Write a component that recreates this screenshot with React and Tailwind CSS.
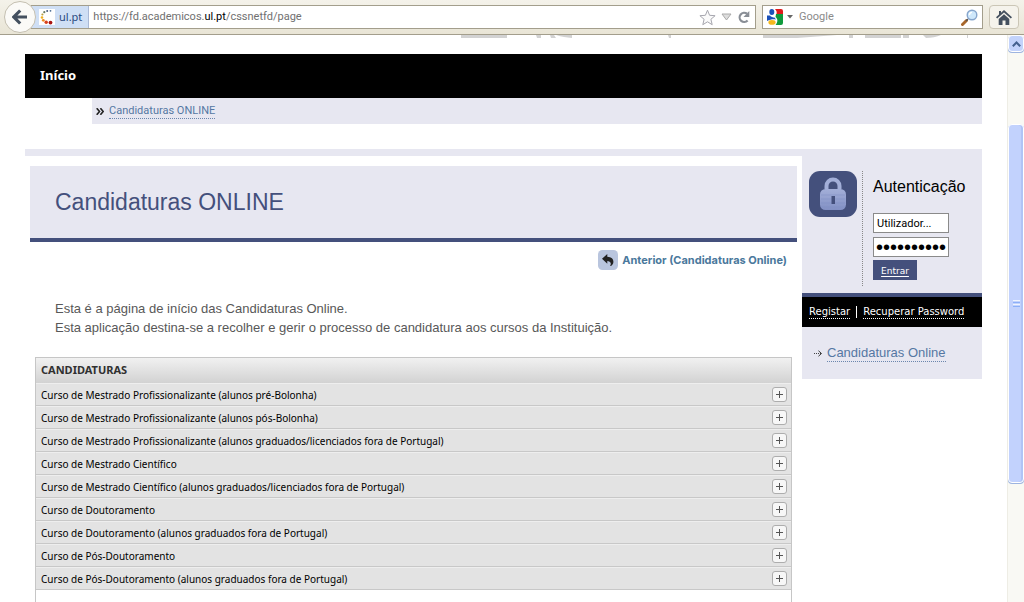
import React from "react";

const courses = [
  "Curso de Mestrado Profissionalizante (alunos pré-Bolonha)",
  "Curso de Mestrado Profissionalizante (alunos pós-Bolonha)",
  "Curso de Mestrado Profissionalizante (alunos graduados/licenciados fora de Portugal)",
  "Curso de Mestrado Científico",
  "Curso de Mestrado Científico (alunos graduados/licenciados fora de Portugal)",
  "Curso de Doutoramento",
  "Curso de Doutoramento (alunos graduados fora de Portugal)",
  "Curso de Pós-Doutoramento",
  "Curso de Pós-Doutoramento (alunos graduados fora de Portugal)",
];

function SiteIcon() {
  return (
    <svg width="16" height="16" viewBox="0 0 16 16" aria-hidden="true">
      <rect width="16" height="16" fill="#fff" />
      <circle cx="11.5" cy="1.8" r="0.9" fill="#4a6a90" />
      <circle cx="8.2" cy="1.900" r="1" fill="#4a5a80" />
      <circle cx="5.300" cy="3.200" r="1.1" fill="#6a7a60" />
      <circle cx="3.400" cy="5.500" r="1.100" fill="#b9a040" />
      <circle cx="3" cy="8.500" r="1.3" fill="#f0b020" />
      <circle cx="4.300" cy="11.300" r="1.400" fill="#ee8a20" />
      <circle cx="7.200" cy="13.200" r="1.700" fill="#d8401c" />
      <circle cx="11.5" cy="13.600" r="1.900" fill="#a81414" />
    </svg>
  );
}

function GoogleIcon() {
  return (
    <svg width="16" height="16" viewBox="0 0 16 16" aria-hidden="true">
      <rect width="16" height="16" fill="#fff" />
      <path d="M8 0h6a2 2 0 0 1 2 2v3H9.5C10 3 9.500 1.500 8 0z" fill="#e01b1b" />
      <path d="M9 5h7v9a2 2 0 0 1-2 2H8.500C11 13 11 10 8.500 8z" fill="#0f9a3c" />
      <path d="M0 6.500h3C4 8 6 8.500 7.500 8.500L9 10.500C6 10 3 10.500 0 12z" fill="#1a50b8" />
      <ellipse cx="4.800" cy="3" rx="2.500" ry="3" fill="#1a50b8" />
      <ellipse cx="5" cy="13.400" rx="3.600" ry="2.400" fill="#f5b81c" />
    </svg>
  );
}

function Toolbar() {
  return (
    <header className="flex h-[35px] shrink-0 items-center border-b border-[#a39e8c] bg-linear-to-b from-[#f4f2ea] to-[#e9e5d6] pr-[5px] font-['Noto_Sans',sans-serif] text-[11px]">
      <button aria-label="Voltar" className="z-10 -mr-[5px] ml-1 flex size-8 shrink-0 items-center justify-center rounded-full border border-[#c4bfb0] bg-[#fbfaf7]">
        <svg width="16" height="16" viewBox="0 0 16 16" aria-hidden="true">
          <path d="M8.200 1.500 1.800 8l6.400 6.500M2.500 8H15" fill="none" stroke="#44505f" strokeWidth="3.200" />
        </svg>
      </button>
      <div className="flex h-6 min-w-0 flex-1 items-center border border-l-0 border-[#a39e8c] bg-white pr-1">
        <div className="flex h-full items-center gap-1 border-r border-[#aab9d6] bg-[#cfdff5] pr-[6px] pl-2 text-[#2a4a80]">
          <SiteIcon />
          <span>ul.pt</span>
        </div>
        <p className="flex-1 truncate pl-1 font-['Roboto',sans-serif] text-[#707070]">
          https://fd.academicos.<span className="text-black">ul.pt</span>/cssnetfd/page
        </p>
        <div className="flex items-center gap-[5px]">
          <button aria-label="Marcar esta página">
            <svg width="17" height="17" viewBox="0 0 17 17" aria-hidden="true">
              <path d="m8.500 1.200 2.100 5.100 5.500.4-4.200 3.600 1.300 5.400-4.700-2.900-4.700 2.900 1.300-5.400L.9 6.700l5.500-.4z" fill="#fafafa" stroke="#a6a6ae" />
            </svg>
          </button>
          <button aria-label="Mostrar histórico">
            <svg width="11" height="8" viewBox="0 0 11 8" aria-hidden="true">
              <path d="M1 1h9L5.500 7z" fill="#ddd" stroke="#aaa" />
            </svg>
          </button>
          <button aria-label="Recarregar">
            <svg width="14" height="14" viewBox="0 0 14 14" aria-hidden="true">
              <path d="M10.600 10.500A4.600 4.600 0 1 1 10 3.700" fill="none" stroke="#898e96" strokeWidth="2.200" />
              <path d="M12.300 1v6H6.500z" fill="#898e96" />
            </svg>
          </button>
        </div>
      </div>
      <div className="ml-[6px] flex h-6 w-[221px] shrink-0 items-center border border-[#a39e8c] bg-white px-1">
        <GoogleIcon />
        <svg className="ml-1" width="6" height="4" viewBox="0 0 6 4" aria-hidden="true">
          <path d="M0 0h6L3 3.500z" fill="#666" />
        </svg>
        <input aria-label="Pesquisar" placeholder="Google" className="min-w-0 flex-1 bg-transparent pl-[6px] font-['Roboto',sans-serif] outline-none placeholder:text-[#8a8a8a]" />
        <button aria-label="Procurar">
          <svg width="17" height="17" viewBox="0 0 17 17" aria-hidden="true">
            <path d="m1.500 15.500 4-4" stroke="#a8672c" strokeWidth="3" strokeLinecap="round" />
            <path d="m5 12 2-2" stroke="#555" strokeWidth="1.500" />
            <circle cx="11" cy="6" r="4.800" fill="#cfe8fb" stroke="#86a5cc" strokeWidth="1.400" />
            <path d="M8.500 6A2.600 2.600 0 0 1 11 3.400" fill="none" stroke="#fff" strokeWidth="1.300" />
          </svg>
        </button>
      </div>
      <button aria-label="Página inicial" className="ml-[6px] flex h-6 w-[30px] shrink-0 items-center justify-center rounded-sm border border-[#cbc6b6] bg-[#f5f3ec]">
        <svg width="16" height="15" viewBox="0 0 16 15" aria-hidden="true">
          <path d="M8 0l8 7.300-1.200 1.300L8 2.500 1.200 8.600 0 7.300 3 4.500V1h2v1.700z" fill="#44505f" />
          <path d="M8 4.200 13.300 9v6H9.500v-4.500h-3V15H2.700V9z" fill="#44505f" />
        </svg>
      </button>
    </header>
  );
}

function ScrollBar() {
  return (
    <div className="flex w-[17px] shrink-0 flex-col border-l border-[#eeede5] bg-[#f9f9f4]" aria-hidden="true">
      <div className="flex h-[17px] items-center justify-center rounded-sm border border-white bg-[#c3d3fb] shadow-[0_1px_0_#9db4e0]">
        <svg width="9" height="6" viewBox="0 0 9 6">
          <path d="m.8 5.200 3.700-3.700 3.700 3.700" fill="none" stroke="#44618f" strokeWidth="2" />
        </svg>
      </div>
      <div className="grow-[73]" />
      <div className="flex grow-[352] items-center justify-center rounded-sm border border-white bg-[#c2d2fd] shadow-[0_1px_0_#9db4e0,inset_-2px_0_0_#b0c4f6]">
        <div className="flex flex-col gap-px">
          <div className="h-px w-[7px] bg-[#eef4fe]" />
          <div className="h-px w-[7px] bg-[#8cb0f8]" />
          <div className="h-px w-[7px] bg-[#eef4fe]" />
          <div className="h-px w-[7px] bg-[#8cb0f8]" />
        </div>
      </div>
      <div className="grow-[120]" />
    </div>
  );
}

/* Lower edge of the faculty lettering that is scrolled out of view. */
function BannerEdge() {
  return (
    <svg className="ml-auto block h-[3px] w-[547px]" viewBox="0 0 547 3" aria-hidden="true">
      <g fill="#d2d2d2">
        <path d="M26 0h46v3H26zM101 0h5v3h-4zM115 0h4l2 3h-5zM121 0h16v3c-6-1-10-1-16-3zM233 0h3v3h-2z" />
        <path d="M328 0h74l-40 3h-34zM414 0h4v3h-4zM430 0h36v3h-36zM468 0h6v3h-6zM488 0h18c-4 2-10 3-15 3zM532 0h1v3h-1z" />
      </g>
    </svg>
  );
}

function LockIcon() {
  return (
    <svg width="48" height="46" viewBox="0 0 48 46" aria-hidden="true" className="block">
      <defs>
        <linearGradient id="lock" x1="0" y1="0" x2="0" y2="1">
          <stop offset="0" stopColor="#a3afd8" />
          <stop offset="1" stopColor="#8290c4" />
        </linearGradient>
      </defs>
      <rect width="48" height="46" rx="11" fill="#44507c" />
      <path d="M17.500 18v-3a6.500 6.500 0 0 1 13 0v3" fill="none" stroke="#a3afd8" strokeWidth="4" />
      <rect x="11" y="18" width="26" height="21" rx="5.500" fill="url(#lock)" />
      <path d="M12 24h24M12 28h24M12 32h24M12 36h24" stroke="#7f8dc0" strokeWidth="0.500" />
      <path d="M22.500 25h3.500v8h-3.500z" fill="#44507c" />
    </svg>
  );
}

function LoginPanel() {
  return (
    <aside className="w-[180px] shrink-0 self-start bg-[#e7e7f1]">
      <div className="flex gap-[5px] px-[7px] pt-[22px] pb-[7px]">
        <LockIcon />
        <form className="flex h-[115px] flex-col items-start border-l border-dotted border-[#888] pl-[10px]" onSubmit={(e) => e.preventDefault()}>
          <h2 className="mt-1 mb-[14px] text-[16px] leading-6 text-black">Autenticação</h2>
          <input aria-label="Utilizador" defaultValue="Utilizador..." className="mb-1 block h-5 w-[76px] border border-[#8a8a8a] bg-white px-[3px] font-['Roboto',sans-serif] text-[11px] text-black" />
          <input aria-label="Password" type="password" defaultValue="0123456789" className="mb-[3px] block h-5 w-[76px] border border-[#8a8a8a] bg-white px-[2px] text-[20px] leading-[18px] text-black" />
          <button className="h-5 w-[44px] shrink-0 bg-[#44507c] pt-1 font-['DejaVu_Sans',sans-serif] text-[9px] text-white underline underline-offset-2">Entrar</button>
        </form>
      </div>
      <div className="flex h-[34px] items-center border-t-4 border-[#44507c] bg-black px-[7px] font-['DejaVu_Sans',sans-serif] text-[10px] whitespace-nowrap text-white">
        <a href="#registar" className="border-b border-dotted border-white leading-3">Registar</a>
        <span className="mx-[6px] h-3 w-px bg-white" />
        <a href="#recuperar" className="border-b border-dotted border-white leading-3">Recuperar Password</a>
      </div>
      <div className="flex h-[52px] items-center gap-1 pl-3">
        <svg width="9" height="7" viewBox="0 0 9 7" aria-hidden="true">
          <path d="M0 3.500h7" stroke="#444" strokeDasharray="1 1" />
          <path d="m4.500.8 3 2.700-3 2.700" fill="none" stroke="#333" />
        </svg>
        <a href="#online" className="border-b border-dotted border-[#6b86ad] text-[13px] leading-4 text-[#5577a3]">Candidaturas Online</a>
      </div>
    </aside>
  );
}

function CourseTable() {
  return (
    <table className="w-full border-separate border-spacing-0 border-x border-t border-[#c6c6c6] font-['Noto_Sans',sans-serif] text-[10px] text-black">
      <thead>
        <tr>
          <th colSpan={2} className="h-[25px] bg-linear-to-b from-[#f1f1f1] to-[#d2d2d2] px-[5px] py-0 text-left text-[11px] text-[#303030]">CANDIDATURAS</th>
        </tr>
      </thead>
      <tbody>
        {courses.map((course) => (
          <tr key={course} className="bg-[#e3e3e3]">
            <td className="h-[23px] border-t border-b border-t-[#eee] border-b-[#c8c8c8] py-0 pr-0 pl-[5px] leading-4">{course}</td>
            <td className="h-[23px] w-[23px] border-t border-b border-t-[#eee] border-b-[#c8c8c8] p-0">
              <button aria-label={"Expandir " + course} className="ml-1 flex size-[15px] items-center justify-center rounded-[3px] border border-[#adadad] bg-[#f7f7f7]">
                <svg width="7" height="7" viewBox="0 0 7 7" aria-hidden="true">
                  <path d="M3.500 0v7M0 3.500h7" stroke="#555" />
                </svg>
              </button>
            </td>
          </tr>
        ))}
        <tr>
          <td colSpan={2} className="h-20" />
        </tr>
      </tbody>
    </table>
  );
}

export default function App() {
  return (
    <div className="flex h-screen flex-col overflow-hidden bg-white font-['Liberation_Sans',Arial,sans-serif]">
      <Toolbar />
      <div className="flex min-h-0 flex-1">
        <div className="min-w-0 flex-1 overflow-hidden pr-[25px] pl-[25px]">
          <BannerEdge />
          <nav className="mt-4 flex h-[44px] items-center bg-black px-[15px]">
            <a href="#inicio" className="font-['Noto_Sans',sans-serif] text-[13px] font-bold text-white">Início</a>
          </nav>
          <nav className="ml-[67px] flex h-[26px] items-center gap-[5px] bg-[#e7e7f1] pl-1">
            <svg width="8" height="7" viewBox="0 0 8 7" aria-hidden="true">
              <path d="m.7.200 2.800 3.300L.7 6.800M4.400.200l2.800 3.300-2.800 3.300" fill="none" stroke="#222" strokeWidth="1.600" />
            </svg>
            <a href="#candidaturas" className="border-b border-dotted border-[#6b86ad] font-['Roboto',sans-serif] text-[11px] leading-[14px] text-[#5577a3]">Candidaturas ONLINE</a>
          </nav>
          <div className="mt-[25px] flex">
            <main className="min-w-0 flex-1 border-t-[7px] border-[#e7e7f1] px-[5px] pt-[10px]">
              <h1 className="flex h-[76px] items-center border-b-4 border-[#44507c] bg-[#e7e7f1] px-[25px] text-[23px] text-[#44507c]">Candidaturas ONLINE</h1>
              <div className="mt-2 flex justify-end pr-[10px]">
                <a href="#anterior" className="flex items-center gap-1 font-['Inter',sans-serif] text-[11px] font-bold text-[#4a789c]">
                  <svg width="20" height="20" viewBox="0 0 20 20" aria-hidden="true">
                    <rect width="20" height="20" rx="4.500" fill="#b9c5de" />
                    <path d="M4 8.800 9.300 4v2.700c4.100.3 6.300 2.200 6.100 5.300-.1 1.700-.9 2.900-2.300 3.900-.5.300-1.100.1-.8-.4 1.300-2.400 0-4.300-3-4.500v2.800z" fill="#222" />
                  </svg>
                  Anterior (Candidaturas Online)
                </a>
              </div>
              <p className="mt-[29px] px-[25px] text-[13px] leading-[19px] text-[#585858]">
                Esta é a página de início das Candidaturas Online.
                <br />
                Esta aplicação destina-se a recolher e gerir o processo de candidatura aos cursos da Instituição.
              </p>
              <div className="mt-5 px-[5px]">
                <CourseTable />
              </div>
            </main>
            <LoginPanel />
          </div>
        </div>
        <ScrollBar />
      </div>
    </div>
  );
}
